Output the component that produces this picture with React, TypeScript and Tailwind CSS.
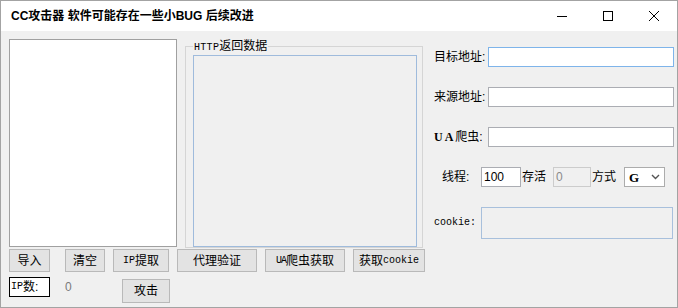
import React from 'react';

const cjk = { fontFamily: '"Liberation Sans", "Noto Sans CJK SC", sans-serif' };
const mono = { fontFamily: '"Liberation Mono", "Noto Sans CJK SC", monospace' };

function Btn({ className, children }: { className: string; children: React.ReactNode }) {
  return (
    <div
      className={`flex items-center justify-center bg-[#e3e3e3] border border-[#b9b9b9] text-[12px] text-black leading-none ${className}`}
    >
      {children}
    </div>
  );
}

function CaptionButtons() {
  return (
    <div className="flex h-full">
      <div className="w-[46px] h-full flex items-center justify-center">
        <svg width="10" height="10" viewBox="0 0 10 10">
          <path d="M0 5.5h10" stroke="#000" strokeWidth="1" />
        </svg>
      </div>
      <div className="w-[46px] h-full flex items-center justify-center">
        <svg width="10" height="10" viewBox="0 0 10 10">
          <rect x="0.5" y="0.5" width="9" height="9" fill="none" stroke="#000" strokeWidth="1" />
        </svg>
      </div>
      <div className="w-[46px] h-full flex items-center justify-center">
        <svg width="10" height="10" viewBox="0 0 10 10">
          <path d="M0 0L10 10M10 0L0 10" stroke="#000" strokeWidth="1" />
        </svg>
      </div>
    </div>
  );
}

export default function App() {
  return (
    <div className="w-[678px] h-[308px] border border-[#a3a3a3] flex flex-col bg-white overflow-hidden" style={cjk}>
      {/* title bar */}
      <div className="h-[30px] flex items-center justify-between bg-white shrink-0">
        <div className="ml-[10px] text-[12px] font-bold text-black">CC攻击器 软件可能存在一些小BUG 后续改进</div>
        <CaptionButtons />
      </div>

      {/* body */}
      <div className="flex-1 bg-[#f0f0f0] flex">
        {/* left area */}
        <div className="w-[424px] pl-[8px] pt-[8px] flex flex-col shrink-0">
          <div className="flex items-start h-[209px]">
            <div className="w-[168px] h-[208px] bg-white border border-[#a0a0a0]" />
            <div className="relative ml-[8px] mt-[7px] w-[238px] h-[202px] border border-[#d5d5d5] pt-[8px] pl-[7px]">
              <div className="absolute left-[7px] top-[-8px] px-[1px] bg-[#f0f0f0] text-[12px] leading-[14px] text-black">
                <span style={mono} className="text-[10px] tracking-[0.3px]">HTTP</span>返回数据
              </div>
              <div className="w-[224px] h-[192px] bg-[#f0f0f0] border border-[#9fbbdc]" />
            </div>
          </div>

          <div className="flex mt-[1px] h-[23px]">
            <Btn className="w-[41px] h-[23px]">导入</Btn>
            <Btn className="ml-[15px] w-[40px] h-[23px]">清空</Btn>
            <Btn className="ml-[8px] w-[56px] h-[23px]">
              <span style={mono} className="text-[10px]">IP</span>提取
            </Btn>
            <Btn className="ml-[8px] w-[80px] h-[23px]">代理验证</Btn>
            <Btn className="ml-[8px] w-[80px] h-[23px]">
              <span style={mono} className="text-[10px] tracking-[-1px]">UA</span>爬虫获取
            </Btn>
            <Btn className="ml-[8px] w-[72px] h-[23px]">
              获取<span style={mono} className="text-[10px]">cookie</span>
            </Btn>
          </div>

          <div className="flex items-start mt-[5px]">
            <div className="w-[41px] h-[20px] bg-white border border-black flex items-center pl-[1px] text-[12px] leading-none">
              <span style={mono} className="text-[10px]">IP</span>数:
            </div>
            <div className="ml-[15px] w-[41px] h-[20px] flex items-center text-[12px] text-[#7a7a7a]">0</div>
            <Btn className="ml-[16px] mt-[2px] w-[48px] h-[24px]">攻击</Btn>
          </div>
        </div>

        {/* right panel */}
        <div className="flex flex-col pl-[9px] pt-[16px] text-[12px] text-black">
          <div className="flex items-center h-[20px]">
            <div className="w-[54px] leading-none">目标地址:</div>
            <div className="w-[186px] h-[20px] bg-white border border-[#7eb4ea]" />
          </div>
          <div className="flex items-center h-[20px] mt-[20px]">
            <div className="w-[54px] leading-none">来源地址:</div>
            <div className="w-[186px] h-[20px] bg-white border border-[#abadb3]" />
          </div>
          <div className="flex items-center h-[20px] mt-[20px]">
            <div className="w-[54px] leading-none">
              <span className="font-bold tracking-[2px]" style={{ fontFamily: '"Liberation Serif", serif' }}>
                UA
              </span>
              爬虫:
            </div>
            <div className="w-[186px] h-[20px] bg-white border border-[#abadb3]" />
          </div>

          <div className="flex items-center h-[20px] mt-[20px]">
            <div className="ml-[8px] w-[39px] leading-none">线程:</div>
            <div className="w-[40px] h-[20px] bg-white border border-[#abadb3] flex items-center pl-[2px] leading-none">100</div>
            <div className="ml-[1px] w-[31px] leading-none">存活</div>
            <div className="w-[38px] h-[20px] bg-[#f0f0f0] border border-[#cccccc] flex items-center pl-[2px] text-[#8a8a8a] leading-none">
              0
            </div>
            <div className="ml-[1px] w-[32px] leading-none">方式</div>
            <div className="w-[41px] h-[20px] bg-white border border-[#acacac] flex items-center justify-between pl-[4px] pr-[4px]">
              <span className="font-bold text-[13px] leading-none" style={{ fontFamily: '"Liberation Serif", serif' }}>
                G
              </span>
              <svg width="9" height="6" viewBox="0 0 9 6">
                <path d="M1 1l3.5 3.5L8 1" fill="none" stroke="#555" strokeWidth="1.4" />
              </svg>
            </div>
          </div>

          <div className="flex items-center h-[32px] mt-[20px]">
            <div className="w-[47px] text-[10px] leading-none" style={mono}>
              cookie:
            </div>
            <div className="w-[192px] h-[32px] bg-[#f0f0f0] border border-[#a8c0dc]" />
          </div>
        </div>
      </div>
    </div>
  );
}
